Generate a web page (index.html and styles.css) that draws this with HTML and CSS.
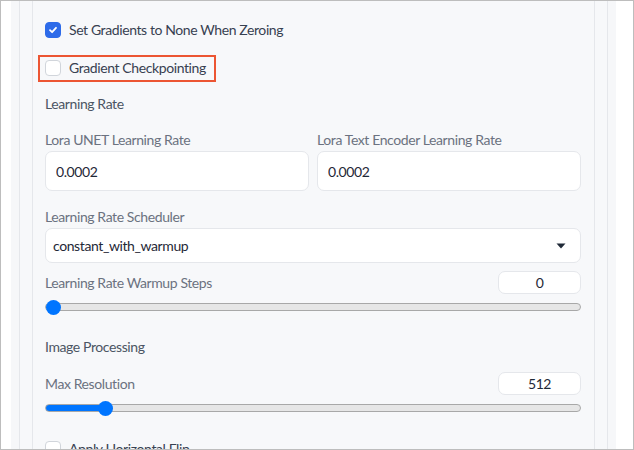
FILE: index.html
```html
<!DOCTYPE html>
<html lang="en">
<head>
  <meta charset="UTF-8">
  <meta name="viewport" content="width=device-width, initial-scale=1.0">
  <title>Training Settings</title>
  <link rel="stylesheet" href="styles.css">
</head>
<body>
  <div class="frame">
    <div class="page">
      <div class="group">
        <div class="block">

          <label class="check">
            <span class="box checked">
              <svg width="10" height="10" viewBox="0 0 10 10"><path d="M2 5.2 L4.1 7.2 L8 2.8" fill="none" stroke="#fff" stroke-width="1.8" stroke-linecap="round" stroke-linejoin="round"/></svg>
            </span>
            <span>Set Gradients to None When Zeroing</span>
          </label>

          <label class="check marked">
            <span class="box"></span>
            <span>Gradient Checkpointing</span>
          </label>

          <div class="section">Learning Rate</div>

          <div class="cols">
            <div class="field">
              <div class="label">Lora UNET Learning Rate</div>
              <input class="text" type="text" value="0.0002">
            </div>
            <div class="field">
              <div class="label">Lora Text Encoder Learning Rate</div>
              <input class="text" type="text" value="0.0002">
            </div>
          </div>

          <div class="field scheduler">
            <div class="label">Learning Rate Scheduler</div>
            <div class="select">
              <span>constant_with_warmup</span>
              <svg width="10" height="6" viewBox="0 0 10 6"><path d="M0.5 0.5 H9.5 L5 5.5 Z" fill="#1f2937"/></svg>
            </div>
          </div>

          <div class="slider-head">
            <div class="label">Learning Rate Warmup Steps</div>
            <input class="num" type="text" value="0">
          </div>
          <input class="range" type="range" min="0" max="100" value="0" style="--fill: 0%">

          <div class="section processing">Image Processing</div>

          <div class="slider-head">
            <div class="label">Max Resolution</div>
            <input class="num" type="text" value="512">
          </div>
          <input class="range" type="range" min="0" max="100" value="10" style="--fill: 10%">

          <label class="check flip">
            <span class="box"></span>
            <span>Apply Horizontal Flip</span>
          </label>

        </div>
      </div>
    </div>
  </div>
</body>
</html>
```

FILE: styles.css
```css
body {
  margin: 0;
  font-family: Lato, "Liberation Sans", sans-serif;
  font-size: 14px;
  letter-spacing: -0.4px;
  background: #fff;
}

.frame {
  width: 634px;
  height: 450px;
  box-sizing: border-box;
  border: 1px solid #bdbdbd;
  overflow: hidden;
}

.page {
  margin: 0 17px 0 10px;
  padding: 0 8px;
  background: #f6f7f9;
  height: 100%;
}

.group {
  height: 100%;
  padding: 0 12px;
  background: #f7f8fa;
  border-left: 1px solid #e5e7eb;
  border-right: 1px solid #e5e7eb;
}

.block {
  height: 100%;
  box-sizing: border-box;
  padding: 16px 13px 0 12px;
  background: #f7f8fa;
  border-left: 1px solid #e5e7eb;
  border-right: 1px solid #e5e7eb;
  display: flex;
  flex-direction: column;
}

/* checkboxes */
.check {
  display: flex;
  align-items: center;
  gap: 8px;
  align-self: flex-start;
  margin-left: -7px;
  padding: 3px 5px 4px;
  border: 2px solid transparent;
  color: #374151;
  line-height: 16px;
}

.check + .check {
  margin-top: 11px;
}

.check.marked {
  border-color: #ec5533;
  padding-right: 8px;
}

.box {
  width: 16px;
  height: 16px;
  box-sizing: border-box;
  border: 1px solid #d1d5db;
  border-radius: 4px;
  background: #fff;
  display: flex;
  align-items: center;
  justify-content: center;
}

.box.checked {
  background: #2d6be9;
  border-color: #2d6be9;
}

.check.flip {
  margin-top: 20px;
}

/* labels */
.section {
  color: #4b5563;
  line-height: 20px;
  margin-top: 12px;
}

.section.processing {
  margin-top: 22px;
}

.label {
  color: #6b7280;
  line-height: 20px;
}

.cols {
  display: grid;
  grid-template-columns: 1fr 1fr;
  gap: 8px;
  margin-top: 16px;
}

.field {
  display: flex;
  flex-direction: column;
  gap: 1px;
}

.scheduler {
  margin-top: 16px;
}

.text {
  height: 40px;
  box-sizing: border-box;
  border: 1px solid #e5e7eb;
  border-radius: 7px;
  background: #fff;
  padding: 0 10px;
  font: inherit;
  letter-spacing: inherit;
  color: #1f2937;
}

.select {
  height: 35px;
  box-sizing: border-box;
  border: 1px solid #e5e7eb;
  border-radius: 7px;
  background: #fff;
  padding: 0 14px 0 7px;
  display: flex;
  align-items: center;
  justify-content: space-between;
  color: #1f2937;
}

/* sliders */
.slider-head {
  display: flex;
  align-items: center;
  justify-content: space-between;
  margin-top: 8px;
}

.section + .slider-head {
  margin-top: 15px;
}

.num {
  width: 83px;
  height: 23px;
  box-sizing: border-box;
  border: 1px solid #e5e7eb;
  border-radius: 7px;
  background: #fff;
  text-align: center;
  font: inherit;
  letter-spacing: inherit;
  color: #1f2937;
  padding: 0;
}

.range {
  -webkit-appearance: none;
  appearance: none;
  display: block;
  width: 100%;
  height: 8px;
  margin: 9px 0 4px;
  background: transparent;
}

.range::-webkit-slider-runnable-track {
  height: 8px;
  box-sizing: border-box;
  border: 1px solid #a8a8a8;
  border-radius: 4px;
  background: linear-gradient(to right, #0075ff var(--fill), #e6e6e6 var(--fill));
}

.range::-webkit-slider-thumb {
  -webkit-appearance: none;
  width: 15px;
  height: 15px;
  margin-top: -4.5px;
  border-radius: 50%;
  background: #0075ff;
  border: none;
}
```
